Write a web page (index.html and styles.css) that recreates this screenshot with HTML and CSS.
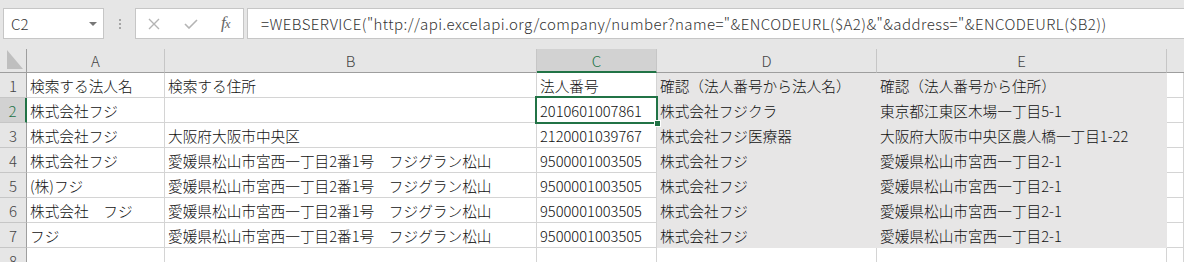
FILE: index.html
```html
<!DOCTYPE html>
<html lang="ja">
<head>
    <meta charset="UTF-8">
    <title>WEBSERVICE</title>
    <link rel="stylesheet" href="styles.css">
</head>
<body>
    <div class="formula-bar">
        <div class="name-box">
            <span>C2</span>
            <span class="drop"></span>
        </div>
        <div class="grip"><i></i><i></i><i></i></div>
        <div class="fx-buttons">
            <svg class="btn-cancel" width="12" height="12" viewBox="0 0 12 12"><path d="M1 1 L11 11 M11 1 L1 11" stroke="#b4b4b4" stroke-width="1.4" fill="none"/></svg>
            <svg class="btn-enter" width="14" height="10" viewBox="0 0 14 10"><path d="M1 5 L5 9 L13 1" stroke="#b4b4b4" stroke-width="1.6" fill="none"/></svg>
            <span class="fx">f<sub>x</sub></span>
        </div>
        <div class="formula">=WEBSERVICE("http://api.excelapi.org/company/number?name="&amp;ENCODEURL($A2)&amp;"&amp;address="&amp;ENCODEURL($B2))</div>
    </div>

    <div class="sheet">
        <div class="grid">
            <div class="hd corner"><span class="tri"></span></div>
            <div class="hd col">A</div>
            <div class="hd col">B</div>
            <div class="hd col sel">C</div>
            <div class="hd col">D</div>
            <div class="hd col">E</div>
            <div class="hd col last"></div>

            <div class="hd row">1</div>
            <div class="c">検索する法人名</div>
            <div class="c">検索する住所</div>
            <div class="c">法人番号</div>
            <div class="c fill">確認（法人番号から法人名）</div>
            <div class="c fill">確認（法人番号から住所）</div>
            <div class="c"></div>

            <div class="hd row sel">2</div>
            <div class="c">株式会社フジ</div>
            <div class="c"></div>
            <div class="c">2010601007861</div>
            <div class="c fill">株式会社フジクラ</div>
            <div class="c fill">東京都江東区木場一丁目5-1</div>
            <div class="c"></div>

            <div class="hd row">3</div>
            <div class="c">株式会社フジ</div>
            <div class="c">大阪府大阪市中央区</div>
            <div class="c">2120001039767</div>
            <div class="c fill">株式会社フジ医療器</div>
            <div class="c fill">大阪府大阪市中央区農人橋一丁目1-22</div>
            <div class="c"></div>

            <div class="hd row">4</div>
            <div class="c">株式会社フジ</div>
            <div class="c">愛媛県松山市宮西一丁目2番1号　フジグラン松山</div>
            <div class="c">9500001003505</div>
            <div class="c fill">株式会社フジ</div>
            <div class="c fill">愛媛県松山市宮西一丁目2-1</div>
            <div class="c"></div>

            <div class="hd row">5</div>
            <div class="c">(株)フジ</div>
            <div class="c">愛媛県松山市宮西一丁目2番1号　フジグラン松山</div>
            <div class="c">9500001003505</div>
            <div class="c fill">株式会社フジ</div>
            <div class="c fill">愛媛県松山市宮西一丁目2-1</div>
            <div class="c"></div>

            <div class="hd row">6</div>
            <div class="c">株式会社　フジ</div>
            <div class="c">愛媛県松山市宮西一丁目2番1号　フジグラン松山</div>
            <div class="c">9500001003505</div>
            <div class="c fill">株式会社フジ</div>
            <div class="c fill">愛媛県松山市宮西一丁目2-1</div>
            <div class="c"></div>

            <div class="hd row">7</div>
            <div class="c">フジ</div>
            <div class="c">愛媛県松山市宮西一丁目2番1号　フジグラン松山</div>
            <div class="c">9500001003505</div>
            <div class="c fill">株式会社フジ</div>
            <div class="c fill">愛媛県松山市宮西一丁目2-1</div>
            <div class="c"></div>

            <div class="hd row">8</div>
            <div class="c"></div>
            <div class="c"></div>
            <div class="c"></div>
            <div class="c"></div>
            <div class="c"></div>
            <div class="c"></div>
        </div>
        <div class="selection"><span class="handle"></span></div>
    </div>
</body>
</html>
```

FILE: styles.css
```css
body {
    margin: 0;
    background-color: #e6e6e6;
    font-family: "Noto Sans CJK JP", "Noto Sans", sans-serif;
    font-weight: 300;
    height: 262px;
    overflow: hidden;
}
.formula-bar {
    display: flex;
    align-items: stretch;
    height: 31px;
    padding: 8px 0 10px 3px;
}
.name-box {
    width: 101px;
    background: #fff;
    border: 1px solid #c6c6c6;
    display: flex;
    align-items: center;
    justify-content: space-between;
    padding: 0 6px 0 7px;
    box-sizing: border-box;
    font-size: 15px;
    color: #333;
}
.name-box .drop {
    width: 0;
    height: 0;
    border-left: 4px solid transparent;
    border-right: 4px solid transparent;
    border-top: 4px solid #777;
    margin-top: 1px;
}
.grip {
    width: 31px;
    display: flex;
    flex-direction: column;
    align-items: center;
    justify-content: center;
    gap: 2px;
}
.grip i {
    width: 2px;
    height: 2px;
    background: #a6a6a6;
}
.fx-buttons {
    width: 109px;
    background: #fff;
    border: 1px solid #c6c6c6;
    box-sizing: border-box;
    display: flex;
    align-items: center;
    padding-left: 12px;
}
.btn-enter {
    margin-left: 24px;
    margin-top: 1px;
}
.fx {
    margin-left: 23px;
    font-family: "Liberation Serif", serif;
    font-style: italic;
    font-size: 17px;
    color: #666;
    line-height: 1;
    margin-top: -2px;
}
.fx sub {
    font-size: 13px;
    vertical-align: 0;
    margin-left: -1px;
}
.formula {
    flex: 1;
    margin-left: 3px;
    background: #fff;
    border: 1px solid #c6c6c6;
    border-right: none;
    display: flex;
    align-items: center;
    padding-left: 13px;
    font-size: 15px;
    letter-spacing: 0.44px;
    color: #333;
    white-space: nowrap;
    overflow: hidden;
}
.sheet {
    position: relative;
    background: #fff;
}
.grid {
    display: grid;
    grid-template-columns: 27px 138px 372px 120px 220px 290px 1fr;
    grid-template-rows: 24px repeat(8, 25px);
}
.grid > div {
    box-sizing: border-box;
}
.hd {
    background: #e6e6e6;
    color: #444;
    font-size: 15px;
    display: flex;
    align-items: center;
    justify-content: center;
}
.hd.col {
    border-right: 1px solid #c6c6c6;
    border-bottom: 1px solid #9e9e9e;
}
.hd.col.last {
    border-right: none;
}
.hd.row {
    border-right: 1px solid #9e9e9e;
    border-bottom: 1px solid #c6c6c6;
}
.hd.col.sel {
    background: #d2d2d2;
    color: #217346;
    border-bottom: 2px solid #217346;
}
.hd.row.sel {
    background: #d2d2d2;
    color: #217346;
    border-right: 2px solid #217346;
}
.corner {
    border-right: 1px solid #9e9e9e;
    border-bottom: 1px solid #9e9e9e;
    position: relative;
}
.corner .tri {
    position: absolute;
    left: 7px;
    bottom: 3px;
    width: 0;
    height: 0;
    border-left: 16px solid transparent;
    border-bottom: 19px solid #bfbfbf;
    transform: scaleX(-1);
}
.c {
    border-right: 1px solid #d4d4d4;
    border-bottom: 1px solid #d4d4d4;
    padding-left: 3px;
    font-size: 14.67px;
    color: #111;
    display: flex;
    align-items: center;
    white-space: nowrap;
    overflow: hidden;
}
.c.fill {
    background: #e7e6e6;
    border-color: #e7e6e6;
}
.selection {
    position: absolute;
    left: 535px;
    top: 47px;
    width: 123px;
    height: 28px;
    border: 2px solid #217346;
    box-sizing: border-box;
}
.handle {
    position: absolute;
    right: -5px;
    bottom: -5px;
    width: 5px;
    height: 5px;
    background: #217346;
    border: 1px solid #fff;
}
```
